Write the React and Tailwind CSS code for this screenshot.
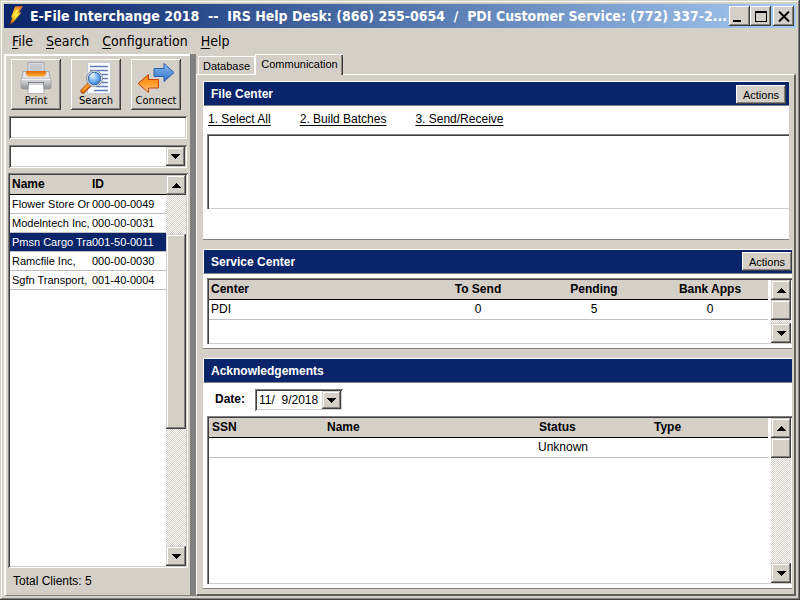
import React from "react";

const raised =
  "bg-[#d4d0c8] shadow-[inset_-1px_-1px_0_#404040,inset_1px_1px_0_#fff,inset_-2px_-2px_0_#808080]";
const raisedSoft =
  "bg-[#d4d0c8] shadow-[inset_-1px_-1px_0_#404040,inset_1px_1px_0_#d4d0c8,inset_-2px_-2px_0_#808080,inset_2px_2px_0_#fff]";
const sunken =
  "bg-white shadow-[inset_1px_1px_0_#808080,inset_-1px_-1px_0_#fff,inset_2px_2px_0_#404040,inset_-2px_-2px_0_#d4d0c8]";
// same as sunken, but open on the right where the pane cuts it off
const sunkenOpen =
  "bg-white shadow-[inset_1px_1px_0_#808080,inset_2px_2px_0_#404040,inset_0_-1px_0_#d4d0c8]";
const track =
  "bg-[repeating-conic-gradient(#ffffff_0_25%,#d4d0c8_0_50%)] bg-[length:2px_2px]";

const clients = [
  { name: "Flower Store Or", id: "000-00-0049" },
  { name: "Modelntech Inc,", id: "000-00-0031" },
  { name: "Pmsn Cargo Tra", id: "001-50-0011", selected: true },
  { name: "Ramcfile Inc,", id: "000-00-0030" },
  { name: "Sgfn Transport,", id: "001-40-0004" },
];

const menus = ["File", "Search", "Configuration", "Help"];

const Arrow = ({ up }) => (
  <svg width="9" height="5" viewBox="0 0 9 5" shapeRendering="crispEdges" aria-hidden="true">
    <path d={up ? "M4 0h1v1h1v1h1v1h1v1h1v1H0V4h1V3h1V2h1V1h1z" : "M0 0h9v1H8v1H7v1H6v1H5v1H4V4H3V3H2V2H1V1H0z"} />
  </svg>
);

const ArrowButton = ({ up }) => (
  <button
    type="button"
    aria-label={up ? "Scroll up" : "Scroll down"}
    className={`flex h-5 w-5 shrink-0 items-center justify-center ${raisedSoft}`}
  >
    <Arrow up={up} />
  </button>
);

const ScrollBar = ({ children }) => (
  <div className={`flex w-5 shrink-0 flex-col ${track}`}>
    <ArrowButton up />
    {children}
    <ArrowButton />
  </div>
);

const Bolt = () => (
  <svg width="18" height="22" viewBox="0 0 18 22" aria-hidden="true">
    <defs>
      <linearGradient id="bolt" x1="0.8" y1="0" x2="0.2" y2="1">
        <stop offset="0" stopColor="#e0702c" />
        <stop offset="0.35" stopColor="#ffb428" />
        <stop offset="0.6" stopColor="#ffd21e" />
        <stop offset="0.8" stopColor="#f08a10" />
        <stop offset="1" stopColor="#5a2a1c" />
      </linearGradient>
    </defs>
    <path d="M8 1.500 16 1 12 7.500h2.500L6.500 17 2 21 5.500 12.500H4z" fill="url(#bolt)" />
    <path d="M9 5 11.500 4.500 9.500 8.500h3L7.500 14.500 9 10.500H6.500z" fill="#fff04a" />
  </svg>
);

const PrintIcon = () => (
  <svg width="32" height="32" viewBox="0 0 32 32" aria-hidden="true">
    <defs>
      <linearGradient id="printerBody" x1="0" y1="0" x2="0" y2="1">
        <stop offset="0" stopColor="#dcdde0" />
        <stop offset="0.5" stopColor="#b8bac0" />
        <stop offset="1" stopColor="#8a8d95" />
      </linearGradient>
      <linearGradient id="printerSlot" x1="0" y1="0" x2="0" y2="1">
        <stop offset="0" stopColor="#e06a08" />
        <stop offset="1" stopColor="#ffad3a" />
      </linearGradient>
    </defs>
    <path d="M8 .5h16V11H8z" fill="#d9dbdf" stroke="#a2a5ab" />
    <path d="M10 2h12v7H10z" fill="#c4c7cc" />
    <path d="M3 9.500h26l1.500 8H1.500z" fill="#dfe0e3" stroke="#a8aab0" />
    <path d="M1 17h30v8q0 2-2 2H3q-2 0-2-2z" fill="url(#printerBody)" stroke="#9699a0" strokeWidth=".7" />
    <path d="M6 9h20v3l-2 2.500H8l-2-2.500z" fill="url(#printerSlot)" />
    <path d="M1.500 17.500h29" stroke="#f2f2f4" />
    <path d="M8 20h16v5H8z" fill="#6e7177" />
    <path d="M9 21h14l1 10.500H8z" fill="#fff" stroke="#a4a7ad" strokeWidth=".8" />
    <path d="M9 22h14" stroke="#d2d4d8" strokeWidth="2" />
  </svg>
);

const SearchIcon = () => (
  <svg width="32" height="32" viewBox="0 0 32 32" aria-hidden="true">
    <defs>
      <radialGradient id="lens" cx=".4" cy=".35" r=".75">
        <stop offset="0" stopColor="#d9eeff" />
        <stop offset="0.5" stopColor="#6fb0ee" />
        <stop offset="1" stopColor="#2c6fc4" />
      </radialGradient>
    </defs>
    <path d="M7.500 .5h23v31h-23z" fill="#fbfcff" stroke="#c4cbdc" />
    <path
      d="M10 4.500h18M10 8.500h18M16 12.500h12M20 16.500h8M20 20.500h8M16 24.500h12M14 28.500h14"
      stroke="#5f7dbd"
      strokeWidth="1.300"
    />
    <path d="M9.500 22.500 3 29" stroke="#b9480a" strokeWidth="5" strokeLinecap="round" />
    <path d="M9 22.500 3 28.500" stroke="#ff9a2a" strokeWidth="3" strokeLinecap="round" />
    <circle cx="14.500" cy="16.500" r="8" fill="#dce0e8" stroke="#8b92a3" strokeWidth="1" />
    <circle cx="14.500" cy="16.500" r="6.200" fill="url(#lens)" stroke="#3b66a6" strokeWidth="1" />
    <path d="M10.500 15q1-3 4-3.500" stroke="#fff" strokeWidth="1.300" fill="none" />
  </svg>
);

const ConnectIcon = () => (
  <svg width="38" height="32" viewBox="0 0 38 32" aria-hidden="true">
    <defs>
      <linearGradient id="arrowBlue" x1="0" y1="0" x2="0" y2="1">
        <stop offset="0" stopColor="#8dbcf2" />
        <stop offset="1" stopColor="#2f6fc6" />
      </linearGradient>
      <linearGradient id="arrowOrange" x1="0" y1="0" x2="0" y2="1">
        <stop offset="0" stopColor="#ff8208" />
        <stop offset="0.5" stopColor="#ff9a2a" />
        <stop offset="1" stopColor="#ffd08a" />
      </linearGradient>
    </defs>
    <path d="M17 6.500h10V1.500L37 10.500 27 19.500V14.500H17z" fill="url(#arrowBlue)" stroke="#2d5fae" />
    <path d="M21.500 17.500h-10V12.500L1 21.500l10.500 9V26h10z" fill="url(#arrowOrange)" stroke="#c2410c" />
  </svg>
);

const ToolButton = ({ label, children }) => (
  <button
    type="button"
    className={`flex h-[51px] w-[50px] flex-col items-center pt-[3px] font-['DejaVu_Sans_Condensed','Noto_Sans',sans-serif] text-[11px] leading-[14px] ${raised}`}
  >
    {children}
    {label}
  </button>
);

const PanelHeader = ({ title, action }) => (
  <div className="flex h-[25px] items-center border-y border-l border-t-white border-b-[#808080] border-l-white bg-[#0a246a] pl-[7px]">
    <h2 className="flex-1 text-xs font-bold text-white">{title}</h2>
    {action}
  </div>
);

const ActionsButton = () => (
  <button type="button" className={`h-[19px] w-[50px] text-[11px] leading-4 ${raised}`}>
    Actions
  </button>
);

const DropDown = ({ id, label, className, children }) => (
  <div className={`relative p-0.5 ${sunken} ${className}`}>
    <select
      id={id}
      aria-label={label}
      className="h-full w-full appearance-none bg-transparent pl-0.5 text-xs outline-none"
    >
      {children}
    </select>
    <span
      className={`pointer-events-none absolute top-0.5 right-0.5 bottom-0.5 flex w-[19px] items-center justify-center ${raisedSoft}`}
    >
      <Arrow />
    </span>
  </div>
);

const TitleBar = () => (
  <header className="flex h-6 items-center bg-linear-to-r from-[#0a246a] to-[#a6caf0] pr-0.5 pl-[3px]">
    <Bolt />
    <h1 className="min-w-0 flex-1 overflow-hidden pl-[5px] font-['DejaVu_Sans_Condensed','Noto_Sans',sans-serif] text-sm leading-6 font-bold whitespace-pre text-white">
      {"E-File Interchange 2018  --  IRS Help Desk: (866) 255-0654  /  PDI Customer Service: (772) 337-2..."}
    </h1>
    <div className="flex">
      <button type="button" aria-label="Minimize" className={`flex h-5 w-[21px] items-end pb-1 pl-1 ${raised}`}>
        <span className="h-0.5 w-2 bg-black" />
      </button>
      <button type="button" aria-label="Maximize" className={`flex h-5 w-[21px] items-center justify-center ${raised}`}>
        <span className="h-[11px] w-3 border border-t-2 border-black" />
      </button>
      <button type="button" aria-label="Close" className={`ml-0.5 flex h-5 w-[21px] items-center justify-center ${raised}`}>
        <svg width="12" height="11" viewBox="0 0 12 11" aria-hidden="true">
          <path d="M1 .5 11 10.500M11 .5 1 10.500" stroke="#000" strokeWidth="2" />
        </svg>
      </button>
    </div>
  </header>
);

const MenuBar = () => (
  <nav className="flex h-[26px] items-center gap-[13px] pl-2 font-['DejaVu_Sans_Condensed','Noto_Sans',sans-serif] text-sm">
    {menus.map((item) => (
      <button key={item} type="button">
        <span className="underline underline-offset-2">{item[0]}</span>
        {item.slice(1)}
      </button>
    ))}
  </nav>
);

const Sidebar = () => (
  <aside className="flex w-[186px] shrink-0 flex-col border-t-2 border-b border-l-2 border-t-white border-b-[#808080] border-l-white px-0.5 pt-[3px]">
    <div className="flex gap-2.5 pl-[3px]">
      <ToolButton label="Print">
        <PrintIcon />
      </ToolButton>
      <ToolButton label="Search">
        <SearchIcon />
      </ToolButton>
      <ToolButton label="Connect">
        <ConnectIcon />
      </ToolButton>
    </div>

    <input
      type="text"
      aria-label="Find client"
      className={`mx-px mt-1.5 h-[23px] px-1 text-xs outline-none ${sunken}`}
    />
    <DropDown label="Client filter" className="mx-px mt-1.5 h-[23px]">
      <option></option>
    </DropDown>

    <div className={`mt-[5px] flex min-h-0 flex-1 p-0.5 ${sunken}`}>
      <div className="min-w-0 flex-1">
        <table className="w-full table-fixed text-left text-[11px]">
          <thead>
            <tr className="h-[19px] border-b border-black bg-[#d4d0c8] text-xs">
              <th className="w-[81px] pl-0.5 font-bold">Name</th>
              <th className="pl-px font-bold">ID</th>
            </tr>
          </thead>
          <tbody>
            {clients.map((client) => (
              <tr
                key={client.id}
                className={`h-[19px] border-b border-[#c0c0c0] ${client.selected ? "bg-[#0a246a] text-white" : ""}`}
              >
                <td className="pl-0.5 leading-4 whitespace-nowrap">{client.name}</td>
                <td className="pl-px leading-4">{client.id}</td>
              </tr>
            ))}
          </tbody>
        </table>
      </div>
      <ScrollBar>
        <div className="h-[39px]" />
        <div className={`h-[195px] ${raisedSoft}`} />
        <div className="flex-1" />
      </ScrollBar>
    </div>
    <p className="py-[5px] pl-[5px] text-xs leading-[17px]">Total Clients: 5</p>
  </aside>
);

const FileCenter = () => (
  <section className="mr-[3px] flex h-[159px] flex-col border-b border-[#808080] bg-white">
    <PanelHeader
      title="File Center"
      action={
        <div className="pr-[3px]">
          <ActionsButton />
        </div>
      }
    />
    <div className="flex h-7 items-center gap-[29px] pb-0.5 pl-[5px] text-xs">
      <a href="#select" className="underline underline-offset-2">1. Select All</a>
      <a href="#build" className="underline underline-offset-2">2. Build Batches</a>
      <a href="#send" className="underline underline-offset-2">3. Send/Receive</a>
    </div>
    <div className={`ml-1 h-[75px] ${sunkenOpen}`} />
  </section>
);

const ServiceCenter = () => (
  <section className="mt-[9px] h-[100px] border-b border-[#808080] bg-white">
    <PanelHeader title="Service Center" action={<ActionsButton />} />
    <div className={`mt-1 ml-1 flex h-[66px] pt-0.5 pr-px pb-px pl-0.5 ${sunkenOpen}`}>
      <div className="flex-1 pr-[3px]">
        <table className="w-full table-fixed text-xs">
          <thead>
            <tr className="h-[19px] border-b border-black bg-[#d4d0c8]">
              <th className="pl-0.5 text-left">Center</th>
              <th className="w-[116px]">To Send</th>
              <th className="w-[116px]">Pending</th>
              <th className="w-[116px]">Bank Apps</th>
            </tr>
          </thead>
          <tbody>
            <tr className="h-5 border-b border-[#c0c0c0] text-center">
              <td className="pl-0.5 text-left">PDI</td>
              <td>0</td>
              <td>5</td>
              <td>0</td>
            </tr>
          </tbody>
        </table>
      </div>
      <ScrollBar>
        <div className={`h-5 ${raisedSoft}`} />
        <div className="flex-1" />
      </ScrollBar>
    </div>
  </section>
);

const Acknowledgements = () => (
  <section className="mt-[9px] flex min-h-0 flex-1 flex-col border-b border-[#808080] bg-white">
    <PanelHeader title="Acknowledgements" />
    <div className="flex h-[33px] pt-1.5 pl-3 text-xs">
      <label htmlFor="ackDate" className="w-10 font-bold leading-5">
        Date:
      </label>
      <DropDown id="ackDate" className="h-[22px] w-[88px]">
        <option>{"11/\u00a0 9/2018"}</option>
      </DropDown>
    </div>
    <div className={`mb-1 ml-1 flex min-h-0 flex-1 pt-0.5 pr-px pb-px pl-0.5 ${sunkenOpen}`}>
      <div className="flex-1 pr-[3px]">
        <table className="w-full table-fixed text-left text-xs">
          <thead>
            <tr className="h-[19px] border-b border-black bg-[#d4d0c8]">
              <th className="w-[115px] pl-[3px]">SSN</th>
              <th className="pl-[3px]">Name</th>
              <th className="w-[115px] pl-[3px]">Status</th>
              <th className="w-[117px] pl-[3px]">Type</th>
            </tr>
          </thead>
          <tbody>
            <tr className="h-5 border-b border-[#c0c0c0]">
              <td></td>
              <td></td>
              <td className="pl-0.5">Unknown</td>
              <td></td>
            </tr>
          </tbody>
        </table>
      </div>
      <ScrollBar>
        <div className={`h-5 ${raisedSoft}`} />
        <div className="flex-1" />
      </ScrollBar>
    </div>
  </section>
);

const Workspace = () => (
  <main className="flex min-w-0 flex-1 flex-col">
    <div role="tablist" className="flex h-5 items-end pl-0.5 text-[11px]">
      <button
        type="button"
        role="tab"
        aria-selected="false"
        className="h-[18px] w-[57px] border-t border-r border-l border-white leading-4"
      >
        Database
      </button>
      <button
        type="button"
        role="tab"
        aria-selected="true"
        className="z-10 -mb-px h-[21px] w-[88px] border-t border-l border-t-white border-l-white bg-[#d4d0c8] pb-0.5 leading-4 shadow-[inset_-1px_0_0_#404040,inset_-2px_0_0_#808080]"
      >
        Communication
      </button>
    </div>
    <div className="flex min-h-0 flex-1 flex-col border-t border-r-2 border-b-2 border-l border-t-white border-r-[#606060] border-b-[#606060] border-l-white pt-1.5 pr-0.5 pb-[5px] pl-1.5">
      <FileCenter />
      <ServiceCenter />
      <Acknowledgements />
    </div>
  </main>
);

const App = () => {
  return (
    <div className="flex h-screen flex-col bg-[#d4d0c8] p-1 font-['Liberation_Sans',Arial,sans-serif] text-black shadow-[inset_-1px_-1px_0_#404040,inset_1px_1px_0_#d4d0c8,inset_-2px_-2px_0_#808080,inset_2px_2px_0_#fff]">
      <TitleBar />
      <MenuBar />
      <div className="flex min-h-0 flex-1">
        <Sidebar />
        <div className="w-1.5 shrink-0 bg-[#808080]" />
        <Workspace />
      </div>
    </div>
  );
};

export default App;
